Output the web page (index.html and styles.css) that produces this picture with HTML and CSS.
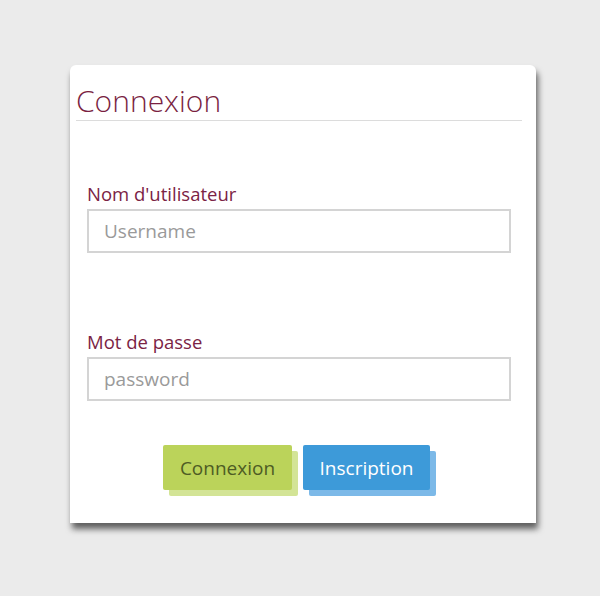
FILE: index.html
```html
<!DOCTYPE html>
<html lang="fr">
<head>
<meta charset="utf-8">
<title>Connexion</title>
<link rel="stylesheet" href="styles.css">
</head>
<body>
<div class="card">
  <h1 class="title">Connexion</h1>
  <form class="form">
    <div class="field">
      <label class="label" for="u">Nom d'utilisateur</label>
      <input class="input" id="u" type="text" placeholder="Username">
    </div>
    <div class="field field-pw">
      <label class="label" for="p">Mot de passe</label>
      <input class="input" id="p" type="password" placeholder="password">
    </div>
    <div class="actions">
      <button type="button" class="btn btn-green">Connexion</button>
      <button type="button" class="btn btn-blue">Inscription</button>
    </div>
  </form>
</div>
</body>
</html>
```
FILE: styles.css
```css
* { box-sizing: border-box; }
html, body { margin: 0; padding: 0; }
body {
  background: #ebebeb;
  font-family: "Open Sans", "Liberation Sans", sans-serif;
  width: 600px;
  height: 596px;
  overflow: hidden;
}
.card {
  margin: 65px 0 0 70px;
  width: 466px;
  height: 458px;
  background: #fff;
  border-radius: 6px 6px 0 0;
  box-shadow: 2px 6px 6px rgba(0, 0, 0, 0.6);
  padding: 0 14px 0 6px;
}
.title {
  margin: 0;
  padding-top: 17px;
  font-size: 30px;
  line-height: 38px;
  font-weight: 300;
  color: #7a1f42;
  border-bottom: 1px solid #dcdcdc;
  padding-bottom: 0;
}
.form {
  padding: 0 11px;
}
.field {
  display: flex;
  flex-direction: column;
  padding-top: 61px;
}
.field-pw {
  padding-top: 77px;
}
.label {
  font-size: 18.5px;
  line-height: 24px;
  color: #7b2344;
  margin-bottom: 3px;
}
.input {
  width: 424px;
  height: 44px;
  border: 2px solid #d4d4d4;
  padding: 0 15px;
  font-family: inherit;
  font-size: 19px;
  color: #555;
  outline: none;
  background: #fff;
}
.input::placeholder { color: #9a9a9a; }
.actions {
  display: flex;
  gap: 11px;
  padding: 44px 0 0 76px;
}
.btn {
  height: 45px;
  border: none;
  border-radius: 2px;
  font-family: inherit;
  font-size: 19px;
  padding: 0;
  cursor: pointer;
}
.btn-green {
  width: 129px;
  background: #bbd35a;
  color: #4e5c24;
  box-shadow: 6px 6px 0 #d3e496;
}
.btn-blue {
  width: 127px;
  background: #3d9ad9;
  color: #fff;
  box-shadow: 6px 6px 0 #7cb9e8;
}
```
